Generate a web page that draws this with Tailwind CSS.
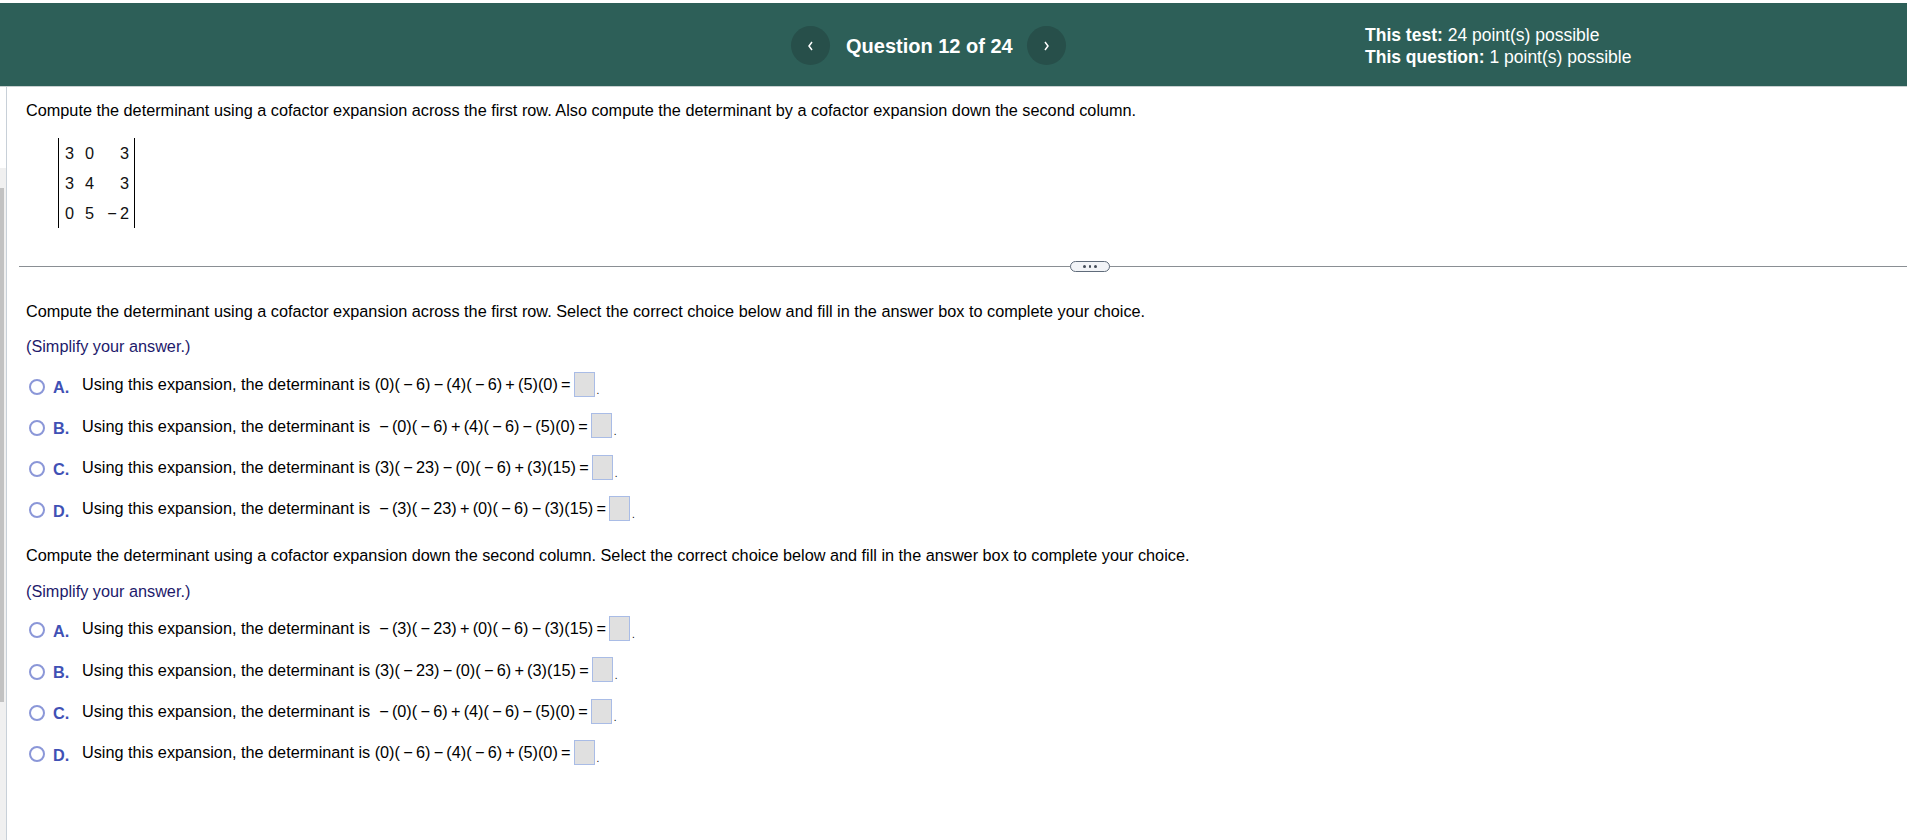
<!DOCTYPE html>
<html lang="en">
<head>
  <meta charset="UTF-8" />
  <title>Question 12 of 24</title>
  <script src="https://cdn.jsdelivr.net/npm/@tailwindcss/browser@4"></script>
</head>
<body class="bg-white text-black font-['Liberation_Sans',Arial,sans-serif] text-[16.25px] overflow-hidden">
  <div class="h-[840px] w-[1907px] flex flex-col">
    <div class="h-[3px] bg-white"></div>
    <header class="h-[84px] bg-[#2d5f58] border-b border-[#c8d0d0] text-white flex items-center shrink-0">
      <div class="ml-[791px] flex items-center mt-[2px]">
        <button class="size-[39px] rounded-full bg-[#274f4a] flex items-center justify-center">
          <svg width="7" height="10" viewBox="0 0 7 10" fill="none" stroke="white" stroke-width="1.5"><path d="M5 1 L2 5 L5 9"/></svg>
        </button>
        <h1 class="ml-[16px] text-[20px] font-bold w-[181px] whitespace-nowrap">Question 12 of 24</h1>
        <button class="size-[39px] rounded-full bg-[#274f4a] flex items-center justify-center">
          <svg width="7" height="10" viewBox="0 0 7 10" fill="none" stroke="white" stroke-width="1.5"><path d="M2 1 L5 5 L2 9"/></svg>
        </button>
      </div>
      <div class="ml-[299px] text-[17.5px] leading-[22px] whitespace-nowrap mt-[3px]">
        <p><b>This test:</b> 24 point(s) possible</p>
        <p><b>This question:</b> 1 point(s) possible</p>
      </div>
    </header>
    <div class="flex-1 flex min-h-0">
      <aside class="w-[7px] shrink-0 border-r border-[#c8d0d8] flex flex-col">
        <div class="h-[81px] bg-white"></div>
        <div class="flex-1 bg-[#f0f0f0] pt-[20px]">
          <div class="w-[4px] h-[514px] bg-[#c2c2c2]"></div>
        </div>
      </aside>
      <main class="flex-1 min-w-0">
        <div class="pl-[19px] pt-[14px] h-[18px] box-content leading-[18px] whitespace-nowrap">Compute the determinant using a cofactor expansion across the first row. Also compute the determinant by a cofactor expansion down the second column.</div>
        <div class="ml-[51px] mt-[19px] w-[77px] h-[90px] border-x border-black grid grid-cols-[20px_20px_1fr] grid-rows-3 items-center pl-[6px] pr-[5px] text-[#111]">
          <span>3</span><span>0</span><span class="text-right">3</span>
          <span>3</span><span>4</span><span class="text-right">3</span>
          <span>0</span><span>5</span><span class="text-right">&minus;&#8201;2</span>
        </div>
        <div class="relative ml-[12px] mt-[38px] h-px bg-[#8a8f94]">
          <div class="absolute left-[1051px] top-[-5px] w-[40px] h-[11px] rounded-full bg-[#f2f4f7] border border-[#5f6b7a] flex items-center justify-center gap-[3px]">
            <span class="size-[2.5px] rounded-full bg-[#444c58]"></span>
            <span class="size-[2.5px] rounded-full bg-[#444c58]"></span>
            <span class="size-[2.5px] rounded-full bg-[#444c58]"></span>
          </div>
        </div>
        <section class="pl-[19px] mt-[35px]">
          <p class="leading-[18px] whitespace-nowrap">Compute the determinant using a cofactor expansion across the first row. Select the correct choice below and fill in the answer box to complete your choice.</p>
          <p class="leading-[18px] mt-[17px] text-[#1d1a6b]">(Simplify your answer.)</p>
          <div class="mt-[16px] flex flex-col gap-[14.33px]">
            <div class="flex items-center h-[27px]">
              <span class="size-[16px] rounded-full border-2 border-[#8b97d8] ml-[3px] mt-[4px]"></span>
              <b class="ml-[8px] w-[29px] text-[#3f51b5] mt-[5px]">A.</b>
              <span>Using this expansion, the determinant is (0)(&#8201;&minus;&#8201;6)&#8201;&minus;&#8201;(4)(&#8201;&minus;&#8201;6)&#8201;+&#8201;(5)(0)&#8201;=</span>
              <span class="ml-[3px] w-[21px] h-[25px] bg-[#e0e0e0] border border-[#a9bce6]"></span>
              <span class="self-end text-[10px] ml-[2px]">.</span>
            </div>
            <div class="flex items-center h-[27px]">
              <span class="size-[16px] rounded-full border-2 border-[#8b97d8] ml-[3px] mt-[4px]"></span>
              <b class="ml-[8px] w-[29px] text-[#3f51b5] mt-[5px]">B.</b>
              <span>Using this expansion, the determinant is &nbsp;&minus;&#8201;(0)(&#8201;&minus;&#8201;6)&#8201;+&#8201;(4)(&#8201;&minus;&#8201;6)&#8201;&minus;&#8201;(5)(0)&#8201;=</span>
              <span class="ml-[3px] w-[21px] h-[25px] bg-[#e0e0e0] border border-[#a9bce6]"></span>
              <span class="self-end text-[10px] ml-[2px]">.</span>
            </div>
            <div class="flex items-center h-[27px]">
              <span class="size-[16px] rounded-full border-2 border-[#8b97d8] ml-[3px] mt-[4px]"></span>
              <b class="ml-[8px] w-[29px] text-[#3f51b5] mt-[5px]">C.</b>
              <span>Using this expansion, the determinant is (3)(&#8201;&minus;&#8201;23)&#8201;&minus;&#8201;(0)(&#8201;&minus;&#8201;6)&#8201;+&#8201;(3)(15)&#8201;=</span>
              <span class="ml-[3px] w-[21px] h-[25px] bg-[#e0e0e0] border border-[#a9bce6]"></span>
              <span class="self-end text-[10px] ml-[2px]">.</span>
            </div>
            <div class="flex items-center h-[27px]">
              <span class="size-[16px] rounded-full border-2 border-[#8b97d8] ml-[3px] mt-[4px]"></span>
              <b class="ml-[8px] w-[29px] text-[#3f51b5] mt-[5px]">D.</b>
              <span>Using this expansion, the determinant is &nbsp;&minus;&#8201;(3)(&#8201;&minus;&#8201;23)&#8201;+&#8201;(0)(&#8201;&minus;&#8201;6)&#8201;&minus;&#8201;(3)(15)&#8201;=</span>
              <span class="ml-[3px] w-[21px] h-[25px] bg-[#e0e0e0] border border-[#a9bce6]"></span>
              <span class="self-end text-[10px] ml-[2px]">.</span>
            </div>
          </div>
        </section>
        <section class="pl-[19px] mt-[24px]">
          <p class="leading-[18px] whitespace-nowrap">Compute the determinant using a cofactor expansion down the second column. Select the correct choice below and fill in the answer box to complete your choice.</p>
          <p class="leading-[18px] mt-[18px] text-[#1d1a6b]">(Simplify your answer.)</p>
          <div class="mt-[15px] flex flex-col gap-[14.33px]">
            <div class="flex items-center h-[27px]">
              <span class="size-[16px] rounded-full border-2 border-[#8b97d8] ml-[3px] mt-[4px]"></span>
              <b class="ml-[8px] w-[29px] text-[#3f51b5] mt-[5px]">A.</b>
              <span>Using this expansion, the determinant is &nbsp;&minus;&#8201;(3)(&#8201;&minus;&#8201;23)&#8201;+&#8201;(0)(&#8201;&minus;&#8201;6)&#8201;&minus;&#8201;(3)(15)&#8201;=</span>
              <span class="ml-[3px] w-[21px] h-[25px] bg-[#e0e0e0] border border-[#a9bce6]"></span>
              <span class="self-end text-[10px] ml-[2px]">.</span>
            </div>
            <div class="flex items-center h-[27px]">
              <span class="size-[16px] rounded-full border-2 border-[#8b97d8] ml-[3px] mt-[4px]"></span>
              <b class="ml-[8px] w-[29px] text-[#3f51b5] mt-[5px]">B.</b>
              <span>Using this expansion, the determinant is (3)(&#8201;&minus;&#8201;23)&#8201;&minus;&#8201;(0)(&#8201;&minus;&#8201;6)&#8201;+&#8201;(3)(15)&#8201;=</span>
              <span class="ml-[3px] w-[21px] h-[25px] bg-[#e0e0e0] border border-[#a9bce6]"></span>
              <span class="self-end text-[10px] ml-[2px]">.</span>
            </div>
            <div class="flex items-center h-[27px]">
              <span class="size-[16px] rounded-full border-2 border-[#8b97d8] ml-[3px] mt-[4px]"></span>
              <b class="ml-[8px] w-[29px] text-[#3f51b5] mt-[5px]">C.</b>
              <span>Using this expansion, the determinant is &nbsp;&minus;&#8201;(0)(&#8201;&minus;&#8201;6)&#8201;+&#8201;(4)(&#8201;&minus;&#8201;6)&#8201;&minus;&#8201;(5)(0)&#8201;=</span>
              <span class="ml-[3px] w-[21px] h-[25px] bg-[#e0e0e0] border border-[#a9bce6]"></span>
              <span class="self-end text-[10px] ml-[2px]">.</span>
            </div>
            <div class="flex items-center h-[27px]">
              <span class="size-[16px] rounded-full border-2 border-[#8b97d8] ml-[3px] mt-[4px]"></span>
              <b class="ml-[8px] w-[29px] text-[#3f51b5] mt-[5px]">D.</b>
              <span>Using this expansion, the determinant is (0)(&#8201;&minus;&#8201;6)&#8201;&minus;&#8201;(4)(&#8201;&minus;&#8201;6)&#8201;+&#8201;(5)(0)&#8201;=</span>
              <span class="ml-[3px] w-[21px] h-[25px] bg-[#e0e0e0] border border-[#a9bce6]"></span>
              <span class="self-end text-[10px] ml-[2px]">.</span>
            </div>
          </div>
        </section>
      </main>
    </div>
  </div>
</body>
</html>
